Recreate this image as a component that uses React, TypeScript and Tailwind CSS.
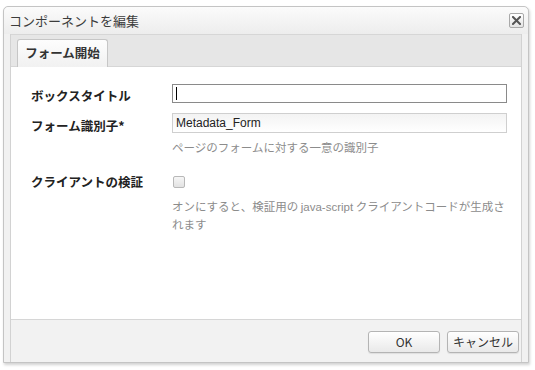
const jp = { fontFamily: '"Noto Sans CJK JP", "Liberation Sans", sans-serif' };

function CloseButton() {
  return (
    <button className="flex h-[15px] w-[15px] items-center justify-center rounded-[2px] border border-[#a9a9a9] bg-gradient-to-b from-white to-[#e4e4e4]">
      <svg width="9" height="9" viewBox="0 0 9 9">
        <path d="M1 1 L8 8 M8 1 L1 8" stroke="#555" strokeWidth="2" strokeLinecap="square" />
      </svg>
    </button>
  );
}

function DialogButton({ label }: { label: string }) {
  return (
    <button
      className="h-[22px] w-[72px] rounded-[3px] border border-[#b4b4b4] bg-gradient-to-b from-white to-[#e9e9e9] text-[12px] text-[#333] shadow-[0_1px_1px_rgba(0,0,0,0.08)]"
      style={jp}
    >
      {label}
    </button>
  );
}

export default function App() {
  return (
    <div className="h-[370px] w-[535px] overflow-hidden bg-white pl-[3px] pt-[6px]" style={jp}>
      <div className="flex h-[357px] w-[526px] flex-col rounded-t-[5px] border border-[#c4c4c4] bg-[#f1f1f1] shadow-[1px_2px_3px_rgba(0,0,0,0.18)]">
        {/* タイトルバー */}
        <div className="flex h-[27px] items-center justify-between rounded-t-[5px] bg-gradient-to-b from-[#fbfbfb] to-[#ededed] pl-[5px] pr-[4px]">
          <span className="text-[13px] text-[#3c3c3c]">コンポーネントを編集</span>
          <CloseButton />
        </div>

        <div className="mx-[6px] flex flex-1 flex-col border-x border-[#d2d2d2]">
          {/* タブ */}
          <div className="flex h-[33px] items-end border-y border-[#d6d6d6] bg-[#e6e6e6] pl-[6px]">
            <div className="-mb-px flex h-[28px] w-[91px] items-center justify-center rounded-t-[3px] border border-b-0 border-[#c6c6c6] bg-gradient-to-b from-[#fdfdfd] to-[#f1f1f1] text-[12.5px] font-bold text-[#333]">
              フォーム開始
            </div>
          </div>

          {/* 本文 */}
          <div className="h-[253px] border-b border-[#d6d6d6] bg-white pl-[20px] pt-[17px] text-[#222]">
            <div className="flex h-[19px] items-center">
              <span className="mt-[6px] w-[141px] text-[12.5px] font-bold">ボックスタイトル</span>
              <div className="flex h-[19px] w-[335px] items-center border border-[#8a8a8a] bg-white pl-[3px]">
                <span className="h-[13px] w-px bg-black" />
              </div>
            </div>

            <div className="mt-[10px] flex h-[20px] items-center">
              <span className="mt-[7px] w-[141px] text-[12.5px] font-bold">フォーム識別子*</span>
              <div
                className="flex h-[20px] w-[335px] items-center border border-[#cfcfcf] bg-gradient-to-b from-[#f3f3f3] to-white pl-[3px] text-[12px] text-[#222]"
                style={{ fontFamily: '"Liberation Sans", Arial, sans-serif' }}
              >
                Metadata_Form
              </div>
            </div>
            <div className="ml-[141px] mt-[6px] text-[11.5px] leading-[16px] text-[#8c8c8c]">
              ページのフォームに対する一意の識別子
            </div>

            <div className="mt-[19px] flex h-[16px] items-center">
              <span className="w-[141px] text-[12.5px] font-bold">クライアントの検証</span>
              <span className="ml-[1px] h-[12px] w-[12px] rounded-[2px] border border-[#b8b8b8] bg-gradient-to-b from-[#f6f6f6] to-[#e2e2e2]" />
            </div>
            <div className="ml-[141px] mt-[8px] whitespace-nowrap text-[11.5px] leading-[17px] text-[#8c8c8c]">
              <div>
                オンにすると、検証用の{" "}
                <span style={{ fontFamily: '"Liberation Sans", Arial, sans-serif' }}>java-script</span>{" "}
                クライアントコードが生成さ
              </div>
              <div>れます</div>
            </div>
          </div>

          {/* フッター */}
          <div className="flex flex-1 items-start justify-end gap-[7px] bg-[#f2f2f2] pr-[2px] pt-[11px]">
            <DialogButton label="OK" />
            <DialogButton label="キャンセル" />
          </div>
        </div>
      </div>
    </div>
  );
}
